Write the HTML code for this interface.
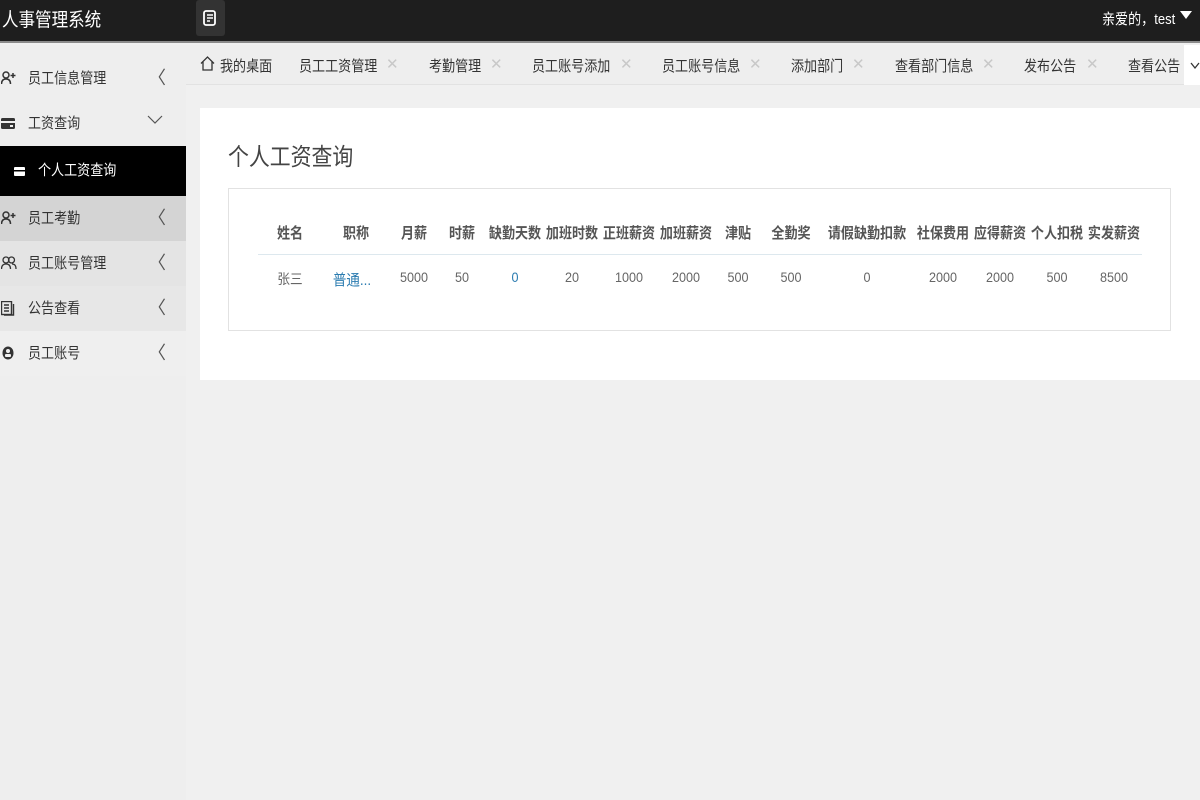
<!DOCTYPE html>
<html><head><meta charset="utf-8"><style>
*{margin:0;padding:0;box-sizing:border-box}
body{width:1200px;height:800px;overflow:hidden;background:#f0f0f0;font-family:"Liberation Sans","Noto Sans CJK SC",sans-serif;color:#333;position:relative}
.a{position:absolute;white-space:nowrap}
.n{display:inline-block;transform:scaleX(.87);transform-origin:left center}
#hd{left:0;top:0;width:1200px;height:43px;background:#1e1e1e;border-bottom:2px solid #8a8a8a}
#sb{left:0;top:45px;width:186px;height:755px;background:#eeeeee}
.it{position:absolute;left:0;width:186px;height:45px;font-size:15px;line-height:45px;color:#333}
.it .t{position:absolute;left:28px;transform:scaleX(.87);transform-origin:left center}
.it .c{position:absolute;left:148px;top:0;font-size:18px;color:#555}
#tabs{left:186px;top:45px;width:1014px;height:40px;background:#eeeeee;border-bottom:1px solid #e2e2e2}
.tb{position:absolute;top:55px;font-size:15px;color:#333;transform:scaleX(.87);transform-origin:left center}
.x{position:absolute;top:55px;font-size:15px;color:#c8c8c8}
.h{position:absolute;top:222px;font-size:15px;font-weight:bold;color:#555;transform:translateX(-50%) scaleX(.87)}
.d{position:absolute;top:269px;font-size:14px;color:#666;transform:translateX(-50%) scaleX(.9)}
</style></head><body>
<div id="hd" class="a"></div>
<div class="a" style="left:2px;top:5px;font-size:19px;color:#fff"><span class="n">人事管理系统</span></div>
<div class="a" style="left:196px;top:0;width:29px;height:36px;background:#333;border-radius:3px"></div>
<svg class="a" style="left:203px;top:10px" width="14" height="16" viewBox="0 0 14 16"><rect x="1" y="1" width="11" height="14" rx="2" fill="none" stroke="#fff" stroke-width="1.8"/><path d="M4 5h6M4 8h6M4 11h3" stroke="#fff" stroke-width="1.5"/></svg>
<div class="a" style="left:1102px;top:8px;font-size:15px;color:#fff"><span class="n">亲爱的，test</span></div>
<div class="a" style="left:1180px;top:11px;width:0;height:0;border-left:6px solid transparent;border-right:6px solid transparent;border-top:8px solid #fff"></div>

<div id="sb" class="a">
<div class="it" style="top:11px"><svg style="position:absolute;left:1px;top:15px" width="16" height="14" viewBox="0 0 16 14"><circle cx="5" cy="4" r="3" fill="none" stroke="#333" stroke-width="1.5"/><path d="M0.5 13c0-4 2-5 4.5-5s4.5 1 4.5 5" fill="none" stroke="#333" stroke-width="1.5"/><path d="M12 2v5M9.5 4.5h5" stroke="#333" stroke-width="1.5"/></svg><span class="t">员工信息管理</span><span class="c">〈</span></div>
<div class="it" style="top:56px"><svg style="position:absolute;left:1px;top:17px" width="14" height="11"><rect width="14" height="11" rx="1.5" fill="#333"/><rect x="0" y="3" width="14" height="2" fill="#eee"/><rect x="9" y="7" width="3" height="2" fill="#eee"/></svg><span class="t">工资查询</span><svg style="position:absolute;left:147px;top:14px" width="16" height="10"><path d="M1 1l7 7 7-7" fill="none" stroke="#555" stroke-width="1.2"/></svg></div>
<div class="it" style="top:101px;height:50px;background:#000;color:#fff;line-height:50px"><svg style="position:absolute;left:14px;top:21px" width="11" height="9"><rect width="11" height="9" rx="1" fill="#fff"/><rect y="3" width="11" height="1.5" fill="#000"/></svg><span class="t" style="left:38px">个人工资查询</span></div>
<div class="it" style="top:151px;background:#d4d4d4"><svg style="position:absolute;left:1px;top:15px" width="16" height="14" viewBox="0 0 16 14"><circle cx="5" cy="4" r="3" fill="none" stroke="#333" stroke-width="1.5"/><path d="M0.5 13c0-4 2-5 4.5-5s4.5 1 4.5 5" fill="none" stroke="#333" stroke-width="1.5"/><path d="M12 2v5M9.5 4.5h5" stroke="#333" stroke-width="1.5"/></svg><span class="t">员工考勤</span><span class="c">〈</span></div>
<div class="it" style="top:196px;background:#e4e4e4"><svg style="position:absolute;left:1px;top:15px" width="16" height="14" viewBox="0 0 16 14"><circle cx="5" cy="4" r="3" fill="none" stroke="#333" stroke-width="1.3"/><path d="M0.5 13c0-4 2-5 4.5-5s4.5 1 4.5 5" fill="none" stroke="#333" stroke-width="1.3"/><circle cx="10.5" cy="4" r="3" fill="none" stroke="#333" stroke-width="1.3"/><path d="M11 8c2.5 0 4 1 4 5" fill="none" stroke="#333" stroke-width="1.3"/></svg><span class="t">员工账号管理</span><span class="c">〈</span></div>
<div class="it" style="top:241px;background:#e7e7e7"><svg style="position:absolute;left:1px;top:15px" width="14" height="15"><rect x="0.5" y="0.5" width="10" height="13" fill="none" stroke="#333" stroke-width="1.4"/><path d="M3 4h5M3 7h5M3 10h5" stroke="#333" stroke-width="1.4"/><path d="M12.5 3v11H3" fill="none" stroke="#333" stroke-width="1.4"/></svg><span class="t">公告查看</span><span class="c">〈</span></div>
<div class="it" style="top:286px;background:#efefef"><svg style="position:absolute;left:2px;top:15px" width="12" height="14"><ellipse cx="6" cy="7" rx="5.5" ry="6.5" fill="#333"/><circle cx="6" cy="5" r="2" fill="#efefef"/><rect x="3" y="8" width="6" height="3" rx="1" fill="#efefef"/></svg><span class="t">员工账号</span><span class="c">〈</span></div>
</div>

<div id="tabs" class="a"></div>
<svg class="a" style="left:200px;top:56px" width="15" height="15" viewBox="0 0 15 15"><path d="M1 7.5L7.5 1L14 7.5M3 6v8h9V6" fill="none" stroke="#333" stroke-width="1.3"/></svg>
<div class="tb" style="left:220px">我的桌面</div>
<div class="tb" style="left:299px">员工工资管理</div><div class="x" style="left:386px">✕</div>
<div class="tb" style="left:429px">考勤管理</div><div class="x" style="left:490px">✕</div>
<div class="tb" style="left:532px">员工账号添加</div><div class="x" style="left:620px">✕</div>
<div class="tb" style="left:662px">员工账号信息</div><div class="x" style="left:749px">✕</div>
<div class="tb" style="left:791px">添加部门</div><div class="x" style="left:852px">✕</div>
<div class="tb" style="left:895px">查看部门信息</div><div class="x" style="left:982px">✕</div>
<div class="tb" style="left:1024px">发布公告</div><div class="x" style="left:1086px">✕</div>
<div class="tb" style="left:1128px">查看公告</div>
<div class="a" style="left:1184px;top:45px;width:16px;height:40px;background:#fff"></div>
<svg class="a" style="left:1190px;top:62px" width="10" height="8"><path d="M1 1l4 5 4-5" fill="none" stroke="#333" stroke-width="1.3"/></svg>

<div class="a" style="left:200px;top:108px;width:1000px;height:272px;background:#fff"></div>
<div class="a" style="left:228px;top:137px;font-size:24px;color:#444"><span class="n">个人工资查询</span></div>
<div class="a" style="left:228px;top:188px;width:943px;height:143px;border:1px solid #e2e2e2"></div>
<div class="a" style="left:258px;top:254px;width:884px;height:1px;background:#dde8ee"></div>
<div class="h" style="left:290px">姓名</div><div class="h" style="left:356px">职称</div><div class="h" style="left:414px">月薪</div><div class="h" style="left:462px">时薪</div><div class="h" style="left:515px">缺勤天数</div><div class="h" style="left:572px">加班时数</div><div class="h" style="left:629px">正班薪资</div><div class="h" style="left:686px">加班薪资</div><div class="h" style="left:738px">津贴</div><div class="h" style="left:791px">全勤奖</div><div class="h" style="left:867px">请假缺勤扣款</div><div class="h" style="left:943px">社保费用</div><div class="h" style="left:1000px">应得薪资</div><div class="h" style="left:1057px">个人扣税</div><div class="h" style="left:1114px">实发薪资</div>
<div class="d" style="left:290px">张三</div><div class="d" style="left:352px;color:#2a7bb0;font-size:15px">普通...</div><div class="d" style="left:414px">5000</div><div class="d" style="left:462px">50</div><div class="d" style="left:515px;color:#2a7bb0">0</div><div class="d" style="left:572px">20</div><div class="d" style="left:629px">1000</div><div class="d" style="left:686px">2000</div><div class="d" style="left:738px">500</div><div class="d" style="left:791px">500</div><div class="d" style="left:867px">0</div><div class="d" style="left:943px">2000</div><div class="d" style="left:1000px">2000</div><div class="d" style="left:1057px">500</div><div class="d" style="left:1114px">8500</div>
</body></html>
